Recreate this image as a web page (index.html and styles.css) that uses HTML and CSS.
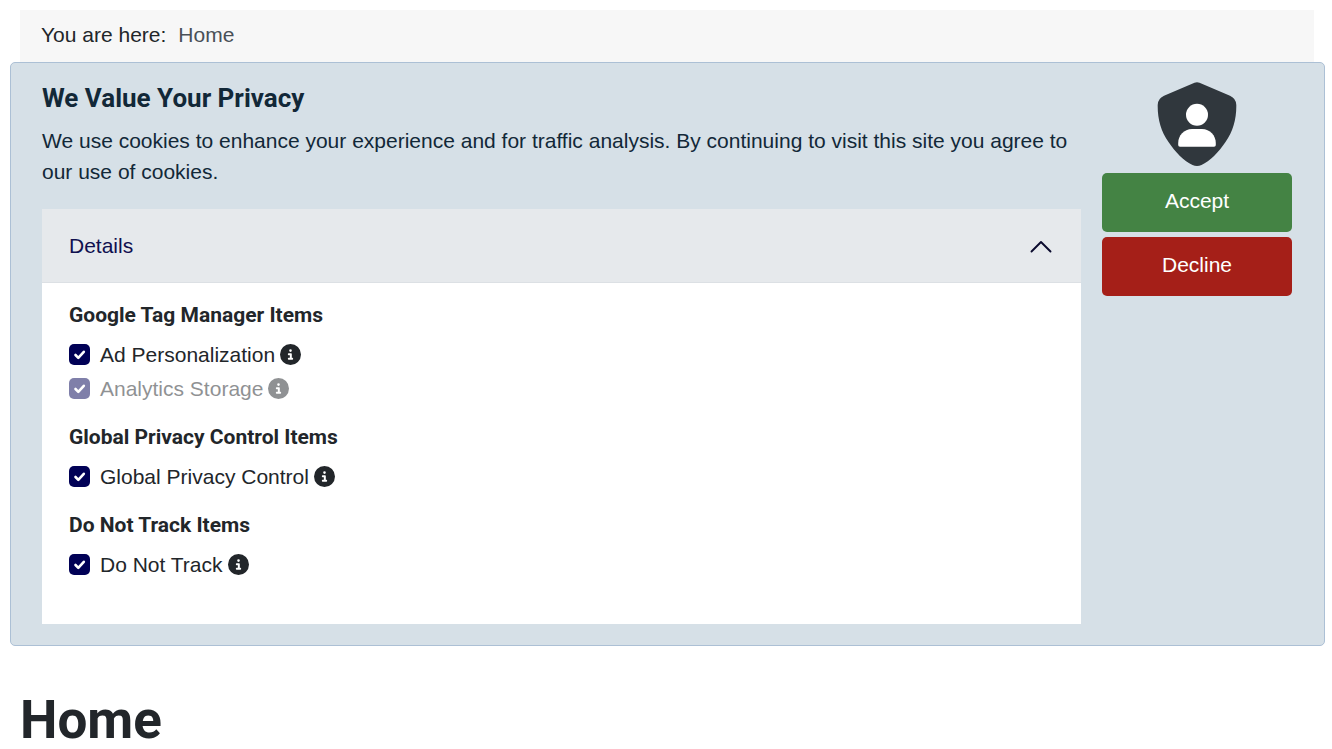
FILE: index.html
```html
<!DOCTYPE html>
<html lang="en">
<head>
  <meta charset="UTF-8" />
  <title>Home</title>
  <meta name="viewport" content="width=device-width, initial-scale=1.0">
  <link rel="stylesheet" href="styles.css">
</head>
<body>
  <svg class="sprite" aria-hidden="true">
    <symbol id="icon-info" viewBox="0 0 512 512">
      <path fill="currentColor" d="M256 512a256 256 0 1 0 0-512 256 256 0 1 0 0 512zM216 336l24 0 0-64-24 0c-13.3 0-24-10.7-24-24s10.7-24 24-24l48 0c13.3 0 24 10.7 24 24l0 88 8 0c13.3 0 24 10.7 24 24s-10.7 24-24 24l-80 0c-13.3 0-24-10.7-24-24s10.7-24 24-24zm40-208a32 32 0 1 1 0 64 32 32 0 1 1 0-64z"/>
    </symbol>
  </svg>

  <nav class="breadcrumb" aria-label="Breadcrumbs">
    <span>You are here:</span>
    <a href="#">Home</a>
  </nav>

  <section class="notice">
    <div class="notice-main">
      <h2>We Value Your Privacy</h2>
      <p>We use cookies to enhance your experience and for traffic analysis. By continuing to visit this site you agree to our use of cookies.</p>

      <div class="accordion">
        <button class="accordion-toggle" type="button" id="details-toggle" aria-expanded="true" aria-controls="details">
          <span>Details</span>
          <svg class="chevron" viewBox="0 0 22 22" aria-hidden="true">
            <path d="M1.500 16.500 L11 7 L20.500 16.500" fill="none" stroke="currentColor" stroke-width="1.900" stroke-linecap="round" stroke-linejoin="round"/>
          </svg>
        </button>

        <div class="accordion-body" id="details">
          <div class="group">
            <h3>Google Tag Manager Items</h3>
            <div class="item">
              <input type="checkbox" id="ad-personalization" checked>
              <label for="ad-personalization">Ad Personalization</label>
              <svg class="info"><use href="#icon-info"/></svg>
            </div>
            <div class="item disabled">
              <input type="checkbox" id="analytics-storage" checked disabled>
              <label for="analytics-storage">Analytics Storage</label>
              <svg class="info"><use href="#icon-info"/></svg>
            </div>
          </div>

          <div class="group">
            <h3>Global Privacy Control Items</h3>
            <div class="item">
              <input type="checkbox" id="gpc" checked>
              <label for="gpc">Global Privacy Control</label>
              <svg class="info"><use href="#icon-info"/></svg>
            </div>
          </div>

          <div class="group">
            <h3>Do Not Track Items</h3>
            <div class="item">
              <input type="checkbox" id="dnt" checked>
              <label for="dnt">Do Not Track</label>
              <svg class="info"><use href="#icon-info"/></svg>
            </div>
          </div>
        </div>
      </div>
    </div>

    <div class="notice-side">
      <svg class="shield" viewBox="0 0 80 84" aria-hidden="true">
        <path fill="#30373d" d="M37.500 0.800Q40 -0.400 42.500 0.800L73 13.700Q79.300 16.500 79.300 23C79.500 37 76 49 68.500 60C61.500 70.500 53 79 44.500 83Q40 85 35.500 83C27 79 18.500 70.500 11.500 60C4 49 0.500 37 0.700 23Q0.700 16.500 7 13.700Z"/>
        <circle cx="40" cy="32.700" r="11" fill="#fff"/>
        <path fill="#fff" d="M35 47H45C53 47 58.800 53.500 58.800 61V63Q58.800 64.700 57 64.700H23Q21.200 64.700 21.200 63V61C21.200 53.500 27 47 35 47Z"/>
      </svg>
      <button class="btn btn-accept" type="button">Accept</button>
      <button class="btn btn-decline" type="button">Decline</button>
    </div>
  </section>

  <h1>Home</h1>

  <script>
    const toggle = document.getElementById('details-toggle');
    toggle.addEventListener('click', () => {
      const open = toggle.getAttribute('aria-expanded') === 'true';
      toggle.setAttribute('aria-expanded', String(!open));
      document.getElementById('details').hidden = open;
    });

    document.querySelectorAll('.btn').forEach(btn => {
      btn.addEventListener('click', () => {
        document.querySelector('.notice').hidden = true;
      });
    });
  </script>
</body>
</html>
```
FILE: styles.css
```css
:root {
  --text: #22262a;
  --navy: #10104f;
  --notice-bg: #d6e0e7;
  --notice-border: #acc0d5;
  --notice-text: #122838;
  --accept: #448344;
  --decline: #a51f18;
}

* { box-sizing: border-box; }

[hidden] { display: none !important; }

body {
  font-family: "Liberation Sans", Arial, sans-serif;
  font-size: 21px;
  line-height: 31px;
  margin: 0;
  padding: 10px 7px 0 10px;
  background: #fff;
  color: var(--text);
}

h1, h2, h3 {
  font-family: Roboto, sans-serif;
  font-weight: 700;
  margin: 0;
}

button {
  font: inherit;
  border: none;
  cursor: pointer;
}

.sprite {
  display: none;
}

.breadcrumb {
  display: flex;
  gap: 12px;
  margin: 0 11px 0 10px;
  padding: 9px 21px 12px;
  background: #f7f7f7;
}

.breadcrumb a {
  color: #495057;
  text-decoration: none;
}

.notice {
  display: flex;
  align-items: flex-start;
  gap: 21px;
  padding: 19px 32px 21px 31px;
  background: var(--notice-bg);
  border: 1px solid var(--notice-border);
  border-radius: 5px;
  color: var(--notice-text);
}

.notice-main {
  flex: 1;
}

.notice h2 {
  font-size: 26px;
  line-height: 32px;
  margin-bottom: 11px;
}

.notice p {
  margin: 0 0 22px;
}

.accordion {
  background: #fff;
  color: var(--text);
}

.accordion-toggle {
  display: flex;
  align-items: center;
  justify-content: space-between;
  width: 100%;
  padding: 21px 29px 21px 27px;
  background: #e6e9ec;
  border-bottom: 1px solid #dce0e4;
  color: var(--navy);
}

.chevron {
  width: 22px;
  height: 22px;
  color: #0a0a2e;
}

.accordion-toggle[aria-expanded="false"] .chevron {
  transform: rotate(180deg);
}

.accordion-body {
  padding: 20px 27px 23px;
}

.group {
  margin-bottom: 20px;
}

.group h3 {
  font-size: 21px;
  line-height: 25px;
  margin-bottom: 9px;
}

.item {
  display: flex;
  align-items: center;
  height: 34px;
}

.item input {
  appearance: none;
  width: 21px;
  height: 21px;
  margin: 1px 10px 0 0;
  border-radius: 5px;
  background: #010156 url("data:image/svg+xml,%3Csvg xmlns='http://www.w3.org/2000/svg' viewBox='0 0 21 21'%3E%3Cpath fill='none' stroke='%23fff' stroke-linecap='round' stroke-linejoin='round' stroke-width='2.600' d='m6.500 11 2.800 2.800 5.500-6'/%3E%3C/svg%3E") center / contain no-repeat;
}

.item input:not(:checked) {
  background: #fff;
  border: 1px solid #adb5bd;
}

.info {
  width: 21px;
  height: 21px;
  margin-left: 5px;
}

.item.disabled {
  opacity: 0.5;
}

.notice-side {
  display: flex;
  flex-direction: column;
  align-items: center;
  gap: 5px;
  width: 190px;
}

.shield {
  width: 80px;
  height: 84px;
  margin-bottom: 2px;
}

.btn {
  width: 100%;
  padding: 12px 20px 16px;
  border-radius: 5px;
  color: #fff;
}

.btn-accept {
  background: var(--accept);
}

.btn-decline {
  background: var(--decline);
}

h1 {
  font-size: 53px;
  line-height: 58px;
  margin: 45px 10px 0;
}
```
